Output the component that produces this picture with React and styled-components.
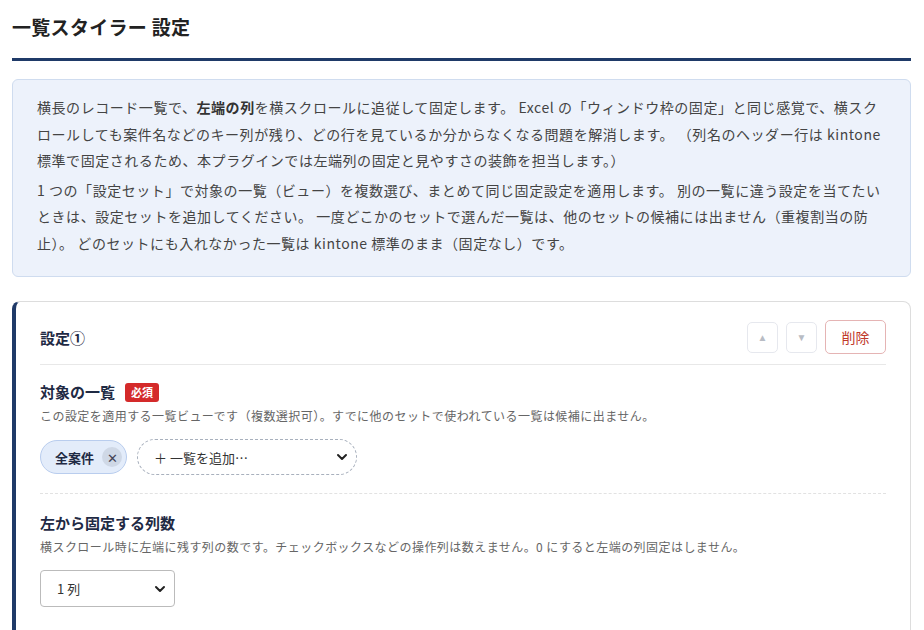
import React from "react";
import styled, { createGlobalStyle } from "styled-components";

const G = createGlobalStyle`
  body { margin: 0; background: #fff; font-family: "Noto Sans CJK JP", "Noto Sans", sans-serif; color: #333; }
`;
const Page = styled.div`padding: 12px 13px 0 12px;`;
const Title = styled.h1`
  margin: 0; font-size: 19px; font-weight: 700; color: #222; line-height: 30px; letter-spacing: 0.3px;
  padding: 0 0 16px; border-bottom: 3px solid #1f3a68;
`;
const Info = styled.div`
  margin-top: 18px; background: #edf2fb; border: 1px solid #cfdcef; border-radius: 6px;
  padding: 14px 24px 20px; font-size: 14px; line-height: 26.5px; color: #444; letter-spacing: 0.55px;
  p { margin: 0 0 3px; } p:last-child { margin: 0; }
  b { color: #333; }
`;
const Card = styled.div`
  margin-top: 24px; border: 1px solid #ddd; border-left: 4px solid #1f3a68; border-radius: 8px;
  padding: 18px 24px 30px 24px;
`;
const Head = styled.div`
  display: flex; align-items: center; justify-content: space-between;
  padding-bottom: 10px; border-bottom: 1px solid #e8e8e8;
`;
const HeadTitle = styled.div`font-size: 15px; font-weight: 700; color: #1f2a44;`;
const Btns = styled.div`display: flex; gap: 8px; align-items: center;`;
const Arrow = styled.button`
  width: 31px; height: 31px; border: 1px solid #e6e8ee; border-radius: 5px; background: #fff;
  color: #b8bcc4; font-size: 10px; padding: 0;
`;
const Del = styled.button`
  height: 34px; width: 61px; border: 1px solid #e5b4b4; border-radius: 5px; background: #fff;
  color: #c0392b; font-size: 14px; font-family: inherit;
`;
const Section = styled.div`
  padding: ${p => p.$top}px 0 ${p => p.$bottom}px; ${p => p.$border && "border-bottom: 1px dashed #e2e2e2;"}
`;
const Label = styled.div`
  display: flex; align-items: center; gap: 10px; font-size: 15px; font-weight: 700; color: #1f2a44; line-height: 22px;
`;
const Req = styled.span`
  background: #d42a2a; color: #fff; font-size: 11px; font-weight: 700; padding: 0 6px; border-radius: 3px; line-height: 19px;
`;
const Desc = styled.div`font-size: 12px; color: #666; margin: 4px 0 14px; line-height: 18px; letter-spacing: 0.45px;`;
const Row = styled.div`display: flex; gap: 10px; align-items: center;`;
const Chip = styled.div`
  display: flex; align-items: center; gap: 8px; height: 32px; padding: 0 4px 0 14px; border-radius: 17px;
  background: #e3ecfa; border: 1px solid #b9cdee; font-size: 13px; font-weight: 700; color: #1f2a44;
`;
const X = styled.span`
  width: 20px; height: 20px; border-radius: 50%; background: #cfd8e6; display: flex; align-items: center; justify-content: center;
  font-size: 13px; font-weight: 400; color: #445;
`;
const Add = styled.div`
  width: 220px; height: 36px; border: 1px dashed #a8b0bd; border-radius: 18px; box-sizing: border-box;
  display: flex; align-items: center; justify-content: space-between; padding: 0 6px 0 16px; font-size: 13px; color: #333;
`;
const Select = styled.div`
  width: 135px; height: 37px; box-sizing: border-box; border: 1px solid #bbb; border-radius: 4px;
  display: flex; align-items: center; justify-content: space-between; padding: 0 6px 0 16px; font-size: 13px; color: #333;
`;
const Chev = () => (
  <svg width="16" height="16" viewBox="0 0 24 24" fill="none" stroke="#222" strokeWidth="3" strokeLinecap="round" strokeLinejoin="round"><path d="M6 9l6 6 6-6" /></svg>
);

export default function App() {
  return (
    <Page>
      <G />
      <Title>一覧スタイラー 設定</Title>
      <Info>
        <p>横長のレコード一覧で、<b>左端の列</b>を横スクロールに追従して固定します。 Excel の「ウィンドウ枠の固定」と同じ感覚で、横スクロールしても案件名などのキー列が残り、どの行を見ているか分からなくなる問題を解消します。 （列名のヘッダー行は kintone 標準で固定されるため、本プラグインでは左端列の固定と見やすさの装飾を担当します。）</p>
        <p>1 つの「設定セット」で対象の一覧（ビュー）を複数選び、まとめて同じ固定設定を適用します。 別の一覧に違う設定を当てたいときは、設定セットを追加してください。 一度どこかのセットで選んだ一覧は、他のセットの候補には出ません（重複割当の防止）。 どのセットにも入れなかった一覧は kintone 標準のまま（固定なし）です。</p>
      </Info>
      <Card>
        <Head>
          <HeadTitle>設定①</HeadTitle>
          <Btns><Arrow>▲</Arrow><Arrow>▼</Arrow><Del>削除</Del></Btns>
        </Head>
        <Section $top={16} $bottom={18} $border>
          <Label>対象の一覧<Req>必須</Req></Label>
          <Desc>この設定を適用する一覧ビューです（複数選択可）。すでに他のセットで使われている一覧は候補に出ません。</Desc>
          <Row>
            <Chip>全案件<X>✕</X></Chip>
            <Add><span>＋ 一覧を追加…</span><Chev /></Add>
          </Row>
        </Section>
        <Section $top={18} $bottom={16}>
          <Label>左から固定する列数</Label>
          <Desc>横スクロール時に左端に残す列の数です。チェックボックスなどの操作列は数えません。0 にすると左端の列固定はしません。</Desc>
          <Select><span>1 列</span><Chev /></Select>
        </Section>
      </Card>
    </Page>
  );
}
